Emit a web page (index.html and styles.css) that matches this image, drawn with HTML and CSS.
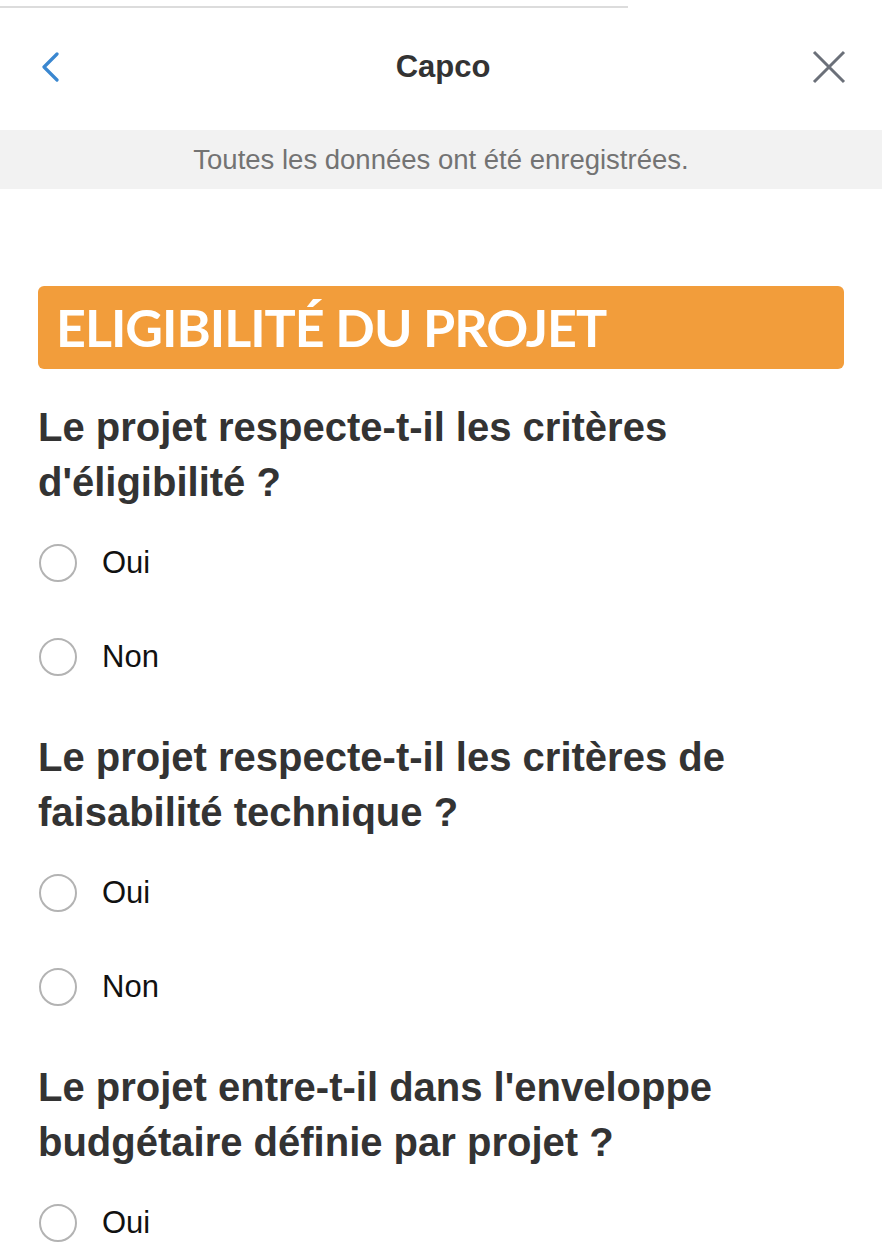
FILE: index.html
```html
<!DOCTYPE html>
<html lang="fr">
<head>
  <meta charset="UTF-8">
  <title>Capco</title>
  <link rel="stylesheet" href="styles.css">
</head>
<body>

  <div class="topline"></div>

  <header class="header">
    <a class="back" href="#" aria-label="Retour">
      <svg width="20" height="30" viewBox="0 0 20 30"><path d="M17 2 L4 15 L17 28" fill="none" stroke="#3a87d0" stroke-width="3.2" stroke-linecap="round" stroke-linejoin="round"/></svg>
    </a>
    <h1 class="title">Capco</h1>
    <a class="close" href="#" aria-label="Fermer">
      <svg width="34" height="34" viewBox="0 0 34 34"><path d="M2 2 L32 32 M32 2 L2 32" fill="none" stroke="#6b7079" stroke-width="3"/></svg>
    </a>
  </header>

  <div class="saved">Toutes les données ont été enregistrées.</div>

  <main class="form">
    <h2 class="section">ELIGIBILITÉ DU PROJET</h2>

    <div class="question">
      <h3>Le projet respecte-t-il les critères d'éligibilité ?</h3>
      <label class="option"><input type="radio" name="q1"><span>Oui</span></label>
      <label class="option"><input type="radio" name="q1"><span>Non</span></label>
    </div>

    <div class="question">
      <h3>Le projet respecte-t-il les critères de faisabilité technique ?</h3>
      <label class="option"><input type="radio" name="q2"><span>Oui</span></label>
      <label class="option"><input type="radio" name="q2"><span>Non</span></label>
    </div>

    <div class="question">
      <h3>Le projet entre-t-il dans l'enveloppe budgétaire définie par projet ?</h3>
      <label class="option"><input type="radio" name="q3"><span>Oui</span></label>
    </div>
  </main>

</body>
</html>
```

FILE: styles.css
```css
html, body {
  margin: 0;
  padding: 0;
  background: #fff;
  font-family: "Liberation Sans", Arial, sans-serif;
  color: #333;
}

.topline {
  width: 628px;
  height: 2px;
  margin-top: 6px;
  background: #dcdcdc;
}

.header {
  height: 122px;
  box-sizing: border-box;
  padding: 0 36px 4px 40px;
  display: flex;
  align-items: center;
  justify-content: space-between;
}

.back, .close {
  display: flex;
  width: 40px;
}

.close {
  justify-content: flex-end;
}

.title {
  margin: 0;
  font-size: 31px;
  font-weight: bold;
  color: #333;
}

.saved {
  height: 59px;
  line-height: 59px;
  background: #f2f2f2;
  color: #737373;
  font-size: 27.5px;
  text-align: center;
}

.form {
  padding: 97px 38px 0;
}

.section {
  margin: 0 0 31px;
  height: 83px;
  line-height: 83px;
  padding: 0 18px;
  border-radius: 6px;
  background: #f29d3b;
  color: #fff;
  font-family: Lato, sans-serif;
  font-size: 52px;
  font-weight: bold;
  letter-spacing: -1px;
}

.question {
  margin-bottom: 26px;
}

.question h3 {
  margin: 0 0 6px;
  font-size: 40px;
  line-height: 55px;
  font-weight: bold;
  color: #333;
}

.option {
  display: flex;
  align-items: center;
  height: 94px;
  font-size: 31px;
  color: #111;
}

.question:last-child .option {
  height: 84px;
  padding-top: 5px;
  box-sizing: content-box;
}

.option input {
  appearance: none;
  width: 38px;
  height: 38px;
  margin: 0 25px 0 1px;
  border: 2px solid #b3b3b3;
  border-radius: 50%;
  background: #fff;
}
```
